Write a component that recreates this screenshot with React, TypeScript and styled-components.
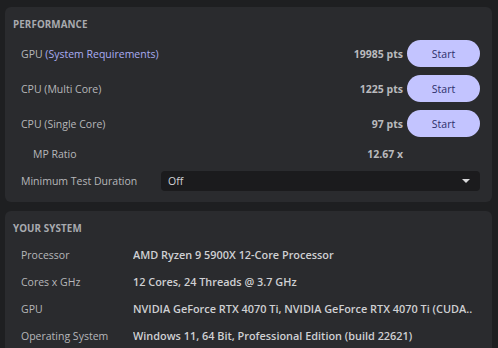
import styled, { createGlobalStyle } from "styled-components";

const GlobalStyle = createGlobalStyle`
  html, body {
    margin: 0;
    padding: 0;
    background: #1e1f21;
    font-family: "Open Sans", "Noto Sans", sans-serif;
  }
`;

const Page = styled.div`
  display: flex;
  flex-direction: column;
  gap: 9px;
  padding: 7px 6px 0 5px;
  height: 348px;
  box-sizing: border-box;
  overflow: hidden;
`;

const Panel = styled.section<{ $open?: boolean }>`
  background: #2a2b2e;
  border-radius: ${(p) => (p.$open ? "6px 6px 0 0" : "6px")};
  padding: 12px 12px 11px 8px;
`;

const Title = styled.div`
  font-size: 9.8px;
  font-weight: 700;
  color: #a8aaae;
  line-height: 12px;
  letter-spacing: 0.1px;
`;

const Rows = styled.div<{ $gap: number; $top: number }>`
  display: flex;
  flex-direction: column;
  gap: ${(p) => p.$gap}px;
  margin-top: ${(p) => p.$top}px;
  padding-left: 8px;
`;

const Row = styled.div<{ $h: number }>`
  display: flex;
  align-items: center;
  height: ${(p) => p.$h}px;
  font-size: 10.5px;
  color: #b6b7ba;
`;

const Label = styled.div<{ $indent?: number }>`
  flex: 1;
  padding-left: ${(p) => p.$indent ?? 0}px;
  white-space: nowrap;
`;

const Accent = styled.span`
  color: #a9acf2;
`;

const Score = styled.div<{ $gapRight?: number }>`
  font-weight: 700;
  color: #b9babd;
  margin-right: ${(p) => p.$gapRight ?? 4}px;
`;

const StartButton = styled.button`
  width: 73px;
  height: 27px;
  border: none;
  border-radius: 14px;
  background: #c3c4ff;
  color: #2d2f6a;
  font-family: inherit;
  font-size: 10.5px;
  padding: 0;
  cursor: pointer;
`;

const FixedLabel = styled.div<{ $w: number }>`
  width: ${(p) => p.$w}px;
  flex-shrink: 0;
  white-space: nowrap;
`;

const Select = styled.div`
  flex: 1;
  height: 20px;
  display: flex;
  align-items: center;
  justify-content: space-between;
  padding: 0 7px;
  background: #1b1b1d;
  border-radius: 4px;
  color: #d2d3d6;
`;

const Caret = styled.span`
  width: 0;
  height: 0;
  border-left: 4px solid transparent;
  border-right: 4px solid transparent;
  border-top: 4px solid #d8d8da;
  margin-right: 3px;
`;

const Value = styled.div`
  flex: 1;
  min-width: 0;
  font-size: 10.9px;
  font-weight: 600;
  color: #cfd0d3;
  white-space: nowrap;
  overflow: hidden;
  text-overflow: ellipsis;
`;

const benchmarks = [
  { name: "GPU", extra: "(System Requirements)", pts: "19985 pts" },
  { name: "CPU (Multi Core)", pts: "1225 pts" },
  { name: "CPU (Single Core)", pts: "97 pts" },
];

const system = [
  ["Processor", "AMD Ryzen 9 5900X 12-Core Processor"],
  ["Cores x GHz", "12 Cores, 24 Threads @ 3.7 GHz"],
  ["GPU", "NVIDIA GeForce RTX 4070 Ti, NVIDIA GeForce RTX 4070 Ti (CUDA.."],
  ["Operating System", "Windows 11, 64 Bit, Professional Edition (build 22621)"],
];

export default function App() {
  return (
    <>
      <GlobalStyle />
      <Page>
        <Panel>
          <Title>PERFORMANCE</Title>
          <Rows $gap={8} $top={9}>
            {benchmarks.map((b) => (
              <Row key={b.name} $h={27}>
                <Label>
                  {b.name} {b.extra && <Accent>{b.extra}</Accent>}
                </Label>
                <Score>{b.pts}</Score>
                <StartButton>Start</StartButton>
              </Row>
            ))}
            <Row $h={18}>
              <Label $indent={12}>MP Ratio</Label>
              <Score $gapRight={77}>12.67 x</Score>
            </Row>
            <Row $h={20}>
              <FixedLabel $w={140}>Minimum Test Duration</FixedLabel>
              <Select>
                <span>Off</span>
                <Caret />
              </Select>
            </Row>
          </Rows>
        </Panel>
        <Panel $open>
          <Title>YOUR SYSTEM</Title>
          <Rows $gap={0} $top={6}>
            {system.map(([k, v]) => (
              <Row key={k} $h={27}>
                <FixedLabel $w={112}>{k}</FixedLabel>
                <Value>{v}</Value>
              </Row>
            ))}
          </Rows>
        </Panel>
      </Page>
    </>
  );
}
